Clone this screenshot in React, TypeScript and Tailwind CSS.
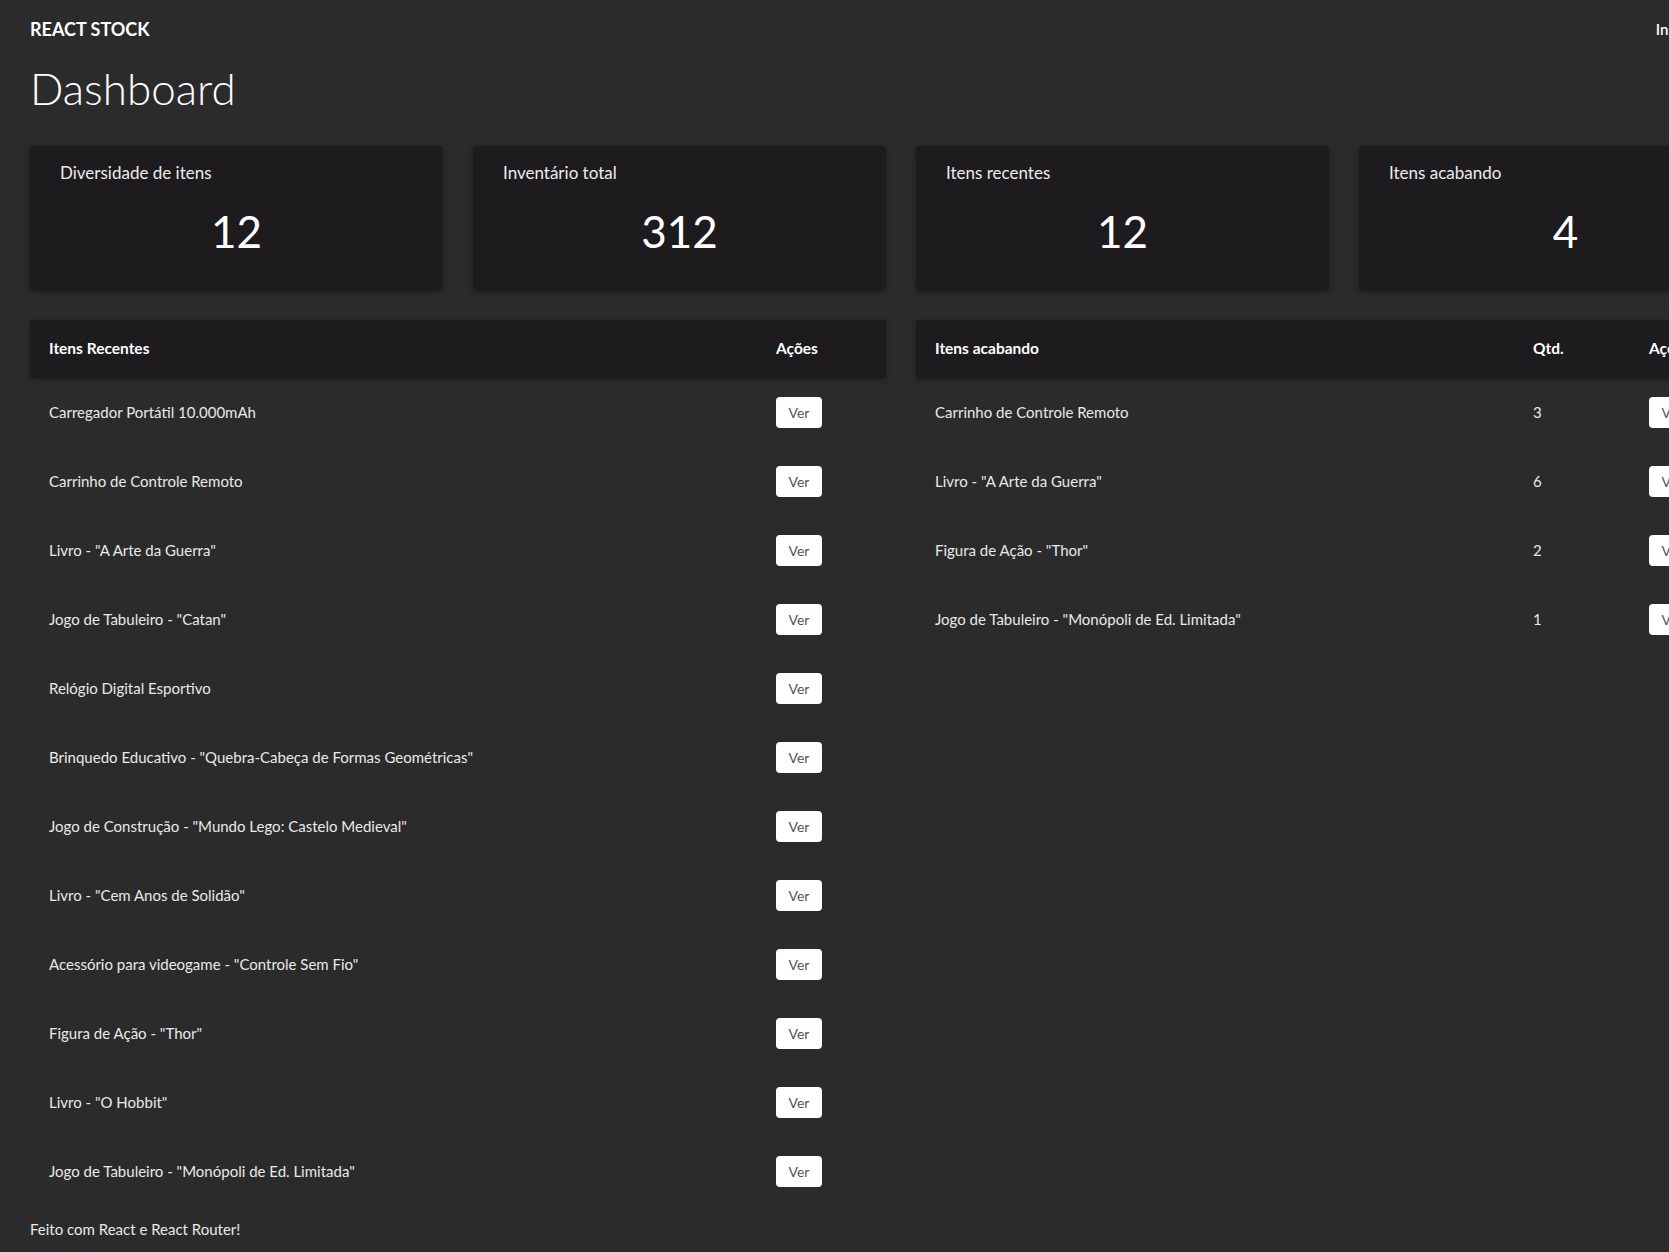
import React from 'react';

const stats = [
    { title: 'Diversidade de itens', value: '12' },
    { title: 'Inventário total', value: '312' },
    { title: 'Itens recentes', value: '12' },
    { title: 'Itens acabando', value: '4' },
];

const recentItems = [
    'Carregador Portátil 10.000mAh',
    'Carrinho de Controle Remoto',
    'Livro - "A Arte da Guerra"',
    'Jogo de Tabuleiro - "Catan"',
    'Relógio Digital Esportivo',
    'Brinquedo Educativo - "Quebra-Cabeça de Formas Geométricas"',
    'Jogo de Construção - "Mundo Lego: Castelo Medieval"',
    'Livro - "Cem Anos de Solidão"',
    'Acessório para videogame - "Controle Sem Fio"',
    'Figura de Ação - "Thor"',
    'Livro - "O Hobbit"',
    'Jogo de Tabuleiro - "Monópoli de Ed. Limitada"',
];

const lowItems = [
    { name: 'Carrinho de Controle Remoto', qty: 3 },
    { name: 'Livro - "A Arte da Guerra"', qty: 6 },
    { name: 'Figura de Ação - "Thor"', qty: 2 },
    { name: 'Jogo de Tabuleiro - "Monópoli de Ed. Limitada"', qty: 1 },
];

const VerButton: React.FC = () => (
    <button className="h-[31px] w-[46px] rounded-[4px] bg-white text-[14px] text-[#555]">
        Ver
    </button>
);

const StatCard: React.FC<{ title: string; value: string }> = ({ title, value }) => (
    <div className="flex h-[144px] flex-col rounded-[4px] bg-[#1d1b1e] px-[30px] pt-[15px] shadow-[0_2px_6px_rgba(0,0,0,0.35)]">
        <h2 className="text-[17px] leading-6 text-[#ececec]">{title}</h2>
        <p className="mt-[24px] text-center text-[44px] leading-none text-white">{value}</p>
    </div>
);

export default function App() {
    return (
        <div
            className="min-h-screen w-[1802px] bg-[#2b2b2b] text-[#e9e9e9]"
            style={{ fontFamily: 'Lato, "Open Sans", sans-serif' }}
        >
            <header className="flex h-[58px] items-center justify-between px-[30px]">
                <span className="text-[18px] font-bold text-white">REACT STOCK</span>
                <nav className="flex gap-[48px] text-[15px] font-semibold text-white">
                    <a href="#">Início</a>
                    <a href="#">Itens</a>
                </nav>
            </header>

            <main className="px-[30px]">
                <h1 className="mt-[8px] text-[44px] font-light leading-none text-white">Dashboard</h1>

                <div className="mt-[36px] grid grid-cols-4 gap-[30px]">
                    {stats.map((s) => (
                        <StatCard key={s.title} title={s.title} value={s.value} />
                    ))}
                </div>

                <div className="mt-[30px] grid grid-cols-2 items-start gap-[30px]">
                    <div>
                        <div className="grid h-[58px] grid-cols-[1fr_91px] items-center bg-[#1d1b1e] px-[19px] text-[15.5px] font-bold text-white shadow-[0_2px_6px_rgba(0,0,0,0.3)]">
                            <span>Itens Recentes</span>
                            <span>Ações</span>
                        </div>
                        {recentItems.map((item) => (
                            <div key={item} className="grid h-[69px] grid-cols-[1fr_91px] items-center px-[19px] text-[15px]">
                                <span>{item}</span>
                                <div>
                                    <VerButton />
                                </div>
                            </div>
                        ))}
                    </div>

                    <div>
                        <div className="grid h-[58px] grid-cols-[1fr_116px_104px] items-center bg-[#1d1b1e] px-[19px] text-[15.5px] font-bold text-white shadow-[0_2px_6px_rgba(0,0,0,0.3)]">
                            <span>Itens acabando</span>
                            <span>Qtd.</span>
                            <span>Ações</span>
                        </div>
                        {lowItems.map((item) => (
                            <div key={item.name} className="grid h-[69px] grid-cols-[1fr_116px_104px] items-center px-[19px] text-[15px]">
                                <span>{item.name}</span>
                                <span>{item.qty}</span>
                                <div>
                                    <VerButton />
                                </div>
                            </div>
                        ))}
                    </div>
                </div>
            </main>

            <footer className="mt-[13px] px-[30px] pb-[20px] text-[15px] leading-5">
                Feito com React e React Router!
            </footer>
        </div>
    );
}
